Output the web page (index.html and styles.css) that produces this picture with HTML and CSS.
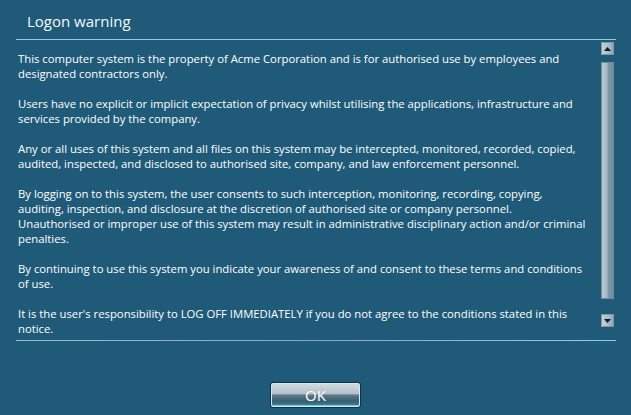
FILE: index.html
```html
<!DOCTYPE html>
<html>
<head>
<meta charset="utf-8">
<link rel="stylesheet" href="styles.css">
</head>
<body>
<div class="dialog">
  <div class="title">Logon warning</div>
  <div class="panel">
    <div class="text">
      <p>This computer system is the property of Acme Corporation and is for authorised use by employees and<br>designated contractors only.</p>
      <p>Users have no explicit or implicit expectation of privacy whilst utilising the applications, infrastructure and<br>services provided by the company.</p>
      <p>Any or all uses of this system and all files on this system may be intercepted, monitored, recorded, copied,<br>audited, inspected, and disclosed to authorised site, company, and law enforcement personnel.</p>
      <p>By logging on to this system, the user consents to such interception, monitoring, recording, copying,<br>auditing, inspection, and disclosure at the discretion of authorised site or company personnel.<br>Unauthorised or improper use of this system may result in administrative disciplinary action and/or criminal<br>penalties.</p>
      <p>By continuing to use this system you indicate your awareness of and consent to these terms and conditions<br>of use.</p>
      <p>It is the user's responsibility to LOG OFF IMMEDIATELY if you do not agree to the conditions stated in this<br>notice.</p>
    </div>
    <div class="scrollbar">
      <div class="sb-btn sb-up"><svg width="7" height="4" viewBox="0 0 7 4"><path d="M0 4 L3.5 0 L7 4 Z" fill="#1a1a1a"/></svg></div>
      <div class="sb-thumb"></div>
      <div class="sb-btn sb-down"><svg width="7" height="4" viewBox="0 0 7 4"><path d="M0 0 L7 0 L3.5 4 Z" fill="#1a1a1a"/></svg></div>
    </div>
  </div>
  <div class="footer">
    <button class="ok">OK</button>
  </div>
</div>
</body>
</html>
```
FILE: styles.css
```css
html, body {
  margin: 0;
  padding: 0;
  background: #1f5b78;
  width: 631px;
  height: 415px;
  overflow: hidden;
}
.dialog {
  font-family: "Open Sans", "Noto Sans", sans-serif;
  color: #ffffff;
}
.title {
  height: 39px;
  box-sizing: border-box;
  padding: 10px 0 0 27px;
  font-size: 15px;
  line-height: 22px;
  color: #f4f8fb;
}
.panel {
  margin: 0 15px 0 16px;
  height: 302px;
  box-sizing: border-box;
  border-top: 1px solid #8ccbe4;
  border-bottom: 1px solid transparent;
  border-image: linear-gradient(90deg, #a5b9c4 0%, #8fa0d8 50%, #7fd3ee 100%) 1;
  border-image-slice: 0 0 1 0;
  display: flex;
  position: relative;
}
.panel::before {
  content: "";
  position: absolute;
  left: 0;
  right: 0;
  top: -1px;
  height: 1px;
  background: #8ccbe4;
}
.text {
  flex: 1;
  padding: 11px 0 0 2px;
  font-size: 11.3px;
  line-height: 15px;
  white-space: nowrap;
  overflow: hidden;
}
.text p {
  margin: 0 0 15px 0;
}
.scrollbar {
  width: 13px;
  margin-right: 2px;
  display: flex;
  flex-direction: column;
  padding-top: 2px;
}
.sb-btn {
  height: 13px;
  box-sizing: border-box;
  border: 1px solid #7c9aa9;
  background: linear-gradient(90deg, #c3d2da 0%, #a9bcc6 60%, #8ea6b3 100%);
  display: flex;
  align-items: center;
  justify-content: center;
}
.sb-thumb {
  margin-top: 7px;
  height: 237px;
  box-sizing: border-box;
  border: 1px solid #6f8d9c;
  background: linear-gradient(90deg, #b7c9d2 0%, #a5bac5 45%, #7d9cab 55%, #6e8f9f 100%);
}
.sb-down {
  margin-top: 15px;
}
.footer {
  display: flex;
  justify-content: center;
  padding-top: 41px;
}
.ok {
  width: 91px;
  height: 26px;
  box-sizing: border-box;
  border: 1px solid #1a2e38;
  border-radius: 3px;
  background: linear-gradient(180deg, #d4dce1 0%, #b3c0c8 45%, #5e7a8a 50%, #3b5d70 75%, #4f7c90 100%);
  box-shadow: inset 0 0 0 1px #c9eef8, inset 0 -2px 1px #4fe0f0;
  color: #ffffff;
  font-family: "Open Sans", "Noto Sans", sans-serif;
  font-size: 15px;
  padding: 0;
  line-height: 22px;
}
```
